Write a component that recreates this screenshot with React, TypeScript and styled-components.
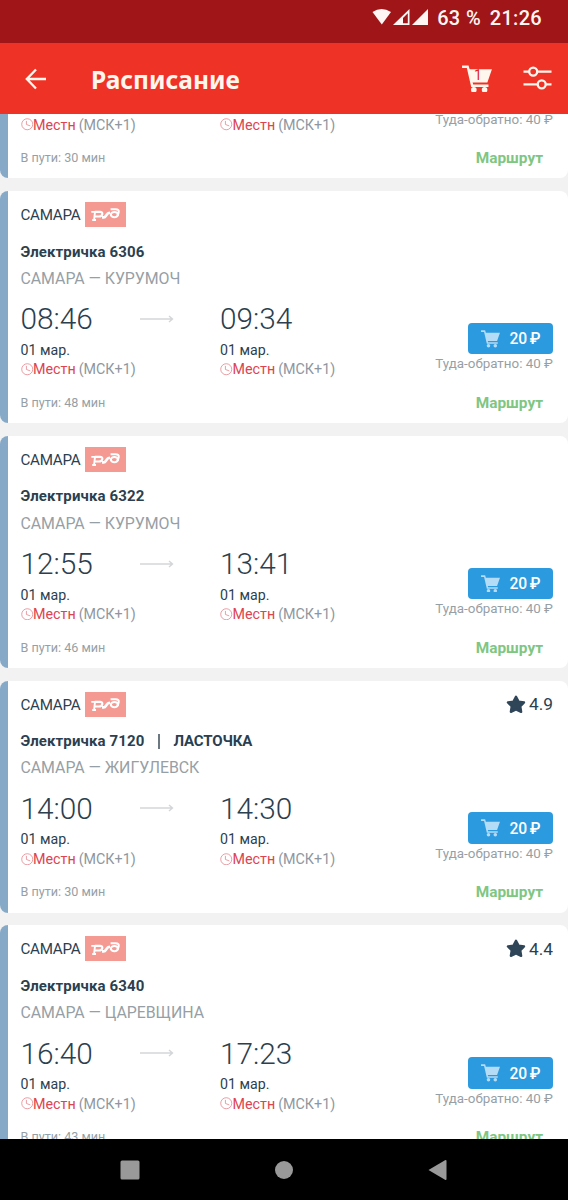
import React from 'react';
import styled, { createGlobalStyle } from 'styled-components';

const Global = createGlobalStyle`
  * { box-sizing: border-box; }
  body { margin: 0; background: #f2f2f2; font-family: Roboto, "Liberation Sans", sans-serif; }
  svg { display: block; flex: none; }
`;

const Screen = styled.div`
  display: flex;
  flex-direction: column;
  width: 568px;
  height: 1200px;
  overflow: hidden;
  background: #f2f2f2;
`;

const StatusBar = styled.div`
  flex: none;
  height: 43px;
  display: flex;
  align-items: flex-start;
  justify-content: flex-end;
  padding: 6px 26px 0 0;
  background: #a01518;
  color: #fff5f2;
  font-size: 20px;
  line-height: 24px;
  font-weight: 500;
`;

const StatusIcons = styled.svg`
  margin: 2px 7px 0 0;
`;

const Battery = styled.span`
  margin-right: 9px;
  word-spacing: 1px;
`;

const Clock24 = styled.span`
  letter-spacing: 0.3px;
`;

const AppBar = styled.header`
  flex: none;
  height: 71px;
  display: flex;
  align-items: center;
  padding: 0 16px 0 24px;
  background: #ef3226;
  color: #fff6ee;
`;

const Title = styled.h1`
  flex: 1;
  margin: 2px 0 0 44px;
  font-family: "Noto Sans", sans-serif;
  font-size: 24.5px;
  line-height: 36px;
  font-weight: 700;
`;

const Actions = styled.div`
  display: flex;
  align-items: center;
  gap: 31px;
`;

const CartBadge = styled.div`
  display: grid;
  align-items: start;
  justify-items: center;
  > * { grid-area: 1 / 1; }
`;

const CartCount = styled.span`
  margin-top: 3px;
  padding-left: 2px;
  color: #d9281e;
  font-size: 14px;
  line-height: 14px;
`;

const List = styled.main`
  flex: 1;
  min-height: 0;
  overflow: hidden;
`;

const Cards = styled.div`
  display: flex;
  flex-direction: column;
  gap: 12.75px;
  margin-top: -167.75px;
`;

const Card = styled.article`
  height: 232px;
  flex: none;
  border-left: 8px solid #86a9c8;
  border-radius: 8px;
  background: #fff;
  padding: 11px 15px 0 12.5px;
  overflow: hidden;
`;

const CardHead = styled.div`
  display: flex;
  align-items: center;
  height: 25px;
  font-size: 15.2px;
  color: #2c3f4f;
`;

const Station = styled.span`
  width: 60px;
  padding-top: 1px;
  letter-spacing: -0.3px;
  white-space: nowrap;
`;

const Logo = styled.svg`
  margin-left: 4.5px;
`;

const Rating = styled.div`
  display: flex;
  align-items: center;
  gap: 3px;
  margin-left: auto;
  font-size: 17.3px;
`;

const Train = styled.div`
  display: flex;
  align-items: center;
  height: 24px;
  margin-top: 12.6px;
  font-size: 15px;
  letter-spacing: 0.12px;
  font-weight: 700;
  color: #2c3f4f;
`;

const Model = styled.span`
  letter-spacing: -0.15px;
`;

const Divider = styled.span`
  width: 2px;
  height: 15px;
  margin: 0 13.5px;
  background: #6b7882;
`;

const Route = styled.div`
  height: 26px;
  line-height: 26px;
  margin-top: 2.4px;
  font-size: 15.9px;
  letter-spacing: -0.05px;
  color: #979fa6;
`;

const Schedule = styled.div`
  display: grid;
  grid-template-columns: 119.5px 80px 1fr auto;
  height: 92px;
  margin-top: 8.5px;
`;

const Stop = styled.div`
  white-space: nowrap;
`;

const Time = styled.div`
  height: 39.4px;
  line-height: 38.6px;
  font-size: 29.8px;
  font-weight: 300;
  color: #2c3f4f;
`;

const DateText = styled.div`
  height: 20px;
  line-height: 20px;
  font-size: 14.2px;
  color: #2c3f4f;
`;

const Zone = styled.div`
  display: flex;
  align-items: center;
  height: 19px;
  font-size: 14.3px;
  color: #8e979f;
`;

const Local = styled.span`
  color: #dd4450;
  margin-right: 3px;
`;

const Arrow = styled.svg`
  margin-top: 13.3px;
`;

const Purchase = styled.div`
  display: flex;
  flex-direction: column;
  align-items: flex-end;
  padding-top: 22.5px;
`;

const BuyButton = styled.button`
  display: flex;
  align-items: center;
  width: 85px;
  height: 31.5px;
  padding: 0 12.5px 0 13px;
  border: 0;
  border-radius: 4px;
  background: #2c9ade;
  color: #fff;
  font: 500 15.6px/20px Roboto, sans-serif;
  justify-content: space-between;
`;

const Price = styled.span`
  padding-top: 1.5px;
  word-spacing: -1.2px;
`;

const RoundTrip = styled.div`
  line-height: 20px;
  font-size: 13.4px;
  color: #979fa6;
  white-space: nowrap;
`;

const CardFoot = styled.div`
  display: flex;
  align-items: center;
  justify-content: space-between;
  height: 20px;
  padding-right: 10px;
`;

const Duration = styled.span`
  font-size: 12.6px;
  color: #979fa6;
`;

const RouteLink = styled.span`
  padding-top: 1px;
  font-size: 15.4px;
  font-weight: 700;
  color: #7fc683;
`;

const NavBar = styled.nav`
  flex: none;
  height: 61px;
  background: #000;
  display: flex;
  align-items: center;
  justify-content: space-between;
  padding: 0 121px 0 120px;
`;

const CartIcon = ({ width, color }: { width: number; color: string }) => (
  <svg width={width} height={width * 0.93} viewBox="0 0 30 28" fill={color}>
    <path d="M0 0.5H6.5L7.6 4.3H30L25.4 17.6H10.6L11.2 19.5H26.5V22H9.2L4.8 3H0Z" />
    <circle cx="11.8" cy="25" r="2.8" />
    <circle cx="22.6" cy="25" r="2.8" />
  </svg>
);

const RailLogo = () => (
  <Logo width="41" height="25" viewBox="0 0 41 25" fill="none" stroke="#fff">
    <rect width="41" height="25" fill="#f59a93" stroke="none" />
    <path d="M6.3 9.9H10.3M10.1 9.4L9 18.3M7.2 18H11" strokeWidth="1.9" />
    <path d="M9.8 9.9H15Q17.8 9.9 17.3 12.2Q16.8 14.5 14 14.5H9.8" strokeWidth="2.1" />
    <path d="M17 15.4H18.7Q20 15.4 21 13.8L22.2 12Q23 10.7 25 10.7" strokeWidth="2.6" />
    <ellipse cx="29.4" cy="12.6" rx="3.6" ry="2.6" strokeWidth="2.1" />
    <path d="M25.6 7.2H30.6Q34.2 7.2 33.7 10.2Q33.4 12.6 32 14" strokeWidth="2.1" />
  </Logo>
);

const Clock = () => (
  <svg width="12.5" height="12.5" viewBox="0 0 12 12" fill="none" stroke="#e58a92" strokeWidth="0.8">
    <circle cx="6" cy="6" r="5.3" />
    <path d="M5.2 2.8V6.2L8.9 7.6" />
  </svg>
);

interface Trip {
  number: string;
  model?: string;
  to: string;
  depart: string;
  arrive: string;
  minutes: number;
  rating?: string;
}

const trips: Trip[] = [
  { number: '6304', to: 'КУРУМОЧ', depart: '08:00', arrive: '08:30', minutes: 30 },
  { number: '6306', to: 'КУРУМОЧ', depart: '08:46', arrive: '09:34', minutes: 48 },
  { number: '6322', to: 'КУРУМОЧ', depart: '12:55', arrive: '13:41', minutes: 46 },
  { number: '7120', model: 'ЛАСТОЧКА', to: 'ЖИГУЛЕВСК', depart: '14:00', arrive: '14:30', minutes: 30, rating: '4.9' },
  { number: '6340', to: 'ЦАРЕВЩИНА', depart: '16:40', arrive: '17:23', minutes: 43, rating: '4.4' },
];

const StopInfo = ({ time }: { time: string }) => (
  <Stop>
    <Time>{time}</Time>
    <DateText>01 мар.</DateText>
    <Zone>
      <Clock />
      <Local>Местн</Local>(МСК+1)
    </Zone>
  </Stop>
);

const TripCard = ({ trip }: { trip: Trip }) => (
  <Card>
    <CardHead>
      <Station>САМАРА</Station>
      <RailLogo />
      {trip.rating && (
        <Rating>
          <svg width="20" height="19" viewBox="0 0 20 19" fill="#2f4558" stroke="#2f4558" strokeWidth="2.4" strokeLinejoin="round">
            <path d="M10 1.8L12.5 6.6L18 7.4L14.2 11.3L15.1 16.8L10 14.5L4.9 16.8L5.8 11.3L2 7.4L7.5 6.6Z" />
          </svg>
          {trip.rating}
        </Rating>
      )}
    </CardHead>
    <Train>
      Электричка {trip.number}
      {trip.model && <><Divider /><Model>{trip.model}</Model></>}
    </Train>
    <Route>САМАРА — {trip.to}</Route>
    <Schedule>
      <StopInfo time={trip.depart} />
      <Arrow width="34" height="10" viewBox="0 0 34 10" fill="none" stroke="#d3d6d8" strokeWidth="1.4">
        <path d="M0 5H32M29 2L32.5 5L29 8" />
      </Arrow>
      <StopInfo time={trip.arrive} />
      <Purchase>
        <BuyButton>
          <CartIcon width={19} color="#b5dcf6" />
          <Price>20 ₽</Price>
        </BuyButton>
        <RoundTrip>Туда-обратно: 40 ₽</RoundTrip>
      </Purchase>
    </Schedule>
    <CardFoot>
      <Duration>В пути: {trip.minutes} мин</Duration>
      <RouteLink>Маршрут</RouteLink>
    </CardFoot>
  </Card>
);

export default function App() {
  return (
    <Screen>
      <Global />
      <StatusBar>
        <StatusIcons width="58" height="18" viewBox="0 0 58 18" fill="#fff5f2">
          <path d="M0.5 4Q9.5 -2 19 4L9.8 16.5Z" />
          <path fillRule="evenodd" d="M21 17L37.5 1V17ZM31 15.3H35.8V5.2L31 10Z" />
          <path d="M40 17L56 1V17Z" />
        </StatusIcons>
        <Battery>63 %</Battery>
        <Clock24>21:26</Clock24>
      </StatusBar>
      <AppBar>
        <svg width="23" height="22" viewBox="0 0 23 22" fill="none" stroke="#fff6ee" strokeWidth="2.3">
          <path d="M22 11H3M12 1.5L2.8 11L12 20.5" />
        </svg>
        <Title>Расписание</Title>
        <Actions>
          <CartBadge>
            <CartIcon width={30} color="#fff6ee" />
            <CartCount>1</CartCount>
          </CartBadge>
          <svg width="29" height="24" viewBox="0 0 29 24" fill="none" stroke="#fff6ee" strokeWidth="2.3">
            <path d="M0.5 5.6H6M14.5 5.6H28.5M0.5 18.3H14.5M23 18.3H28.5" />
            <circle cx="10.2" cy="5.6" r="4" />
            <circle cx="18.7" cy="18.3" r="4" />
          </svg>
        </Actions>
      </AppBar>
      <List>
        <Cards>
          {trips.map((trip) => <TripCard key={trip.number} trip={trip} />)}
        </Cards>
      </List>
      <NavBar>
        <svg width="20" height="20" viewBox="0 0 20 20"><rect x="0.5" y="0.5" width="19" height="19" rx="1.5" fill="#999" /></svg>
        <svg width="18" height="18" viewBox="0 0 18 18"><circle cx="9" cy="9" r="9" fill="#999" /></svg>
        <svg width="19" height="22" viewBox="0 0 19 22"><path d="M0.5 11L17 1.2Q18.5 0.5 18.5 2V20Q18.5 21.5 17 20.8Z" fill="#999" /></svg>
      </NavBar>
    </Screen>
  );
}
